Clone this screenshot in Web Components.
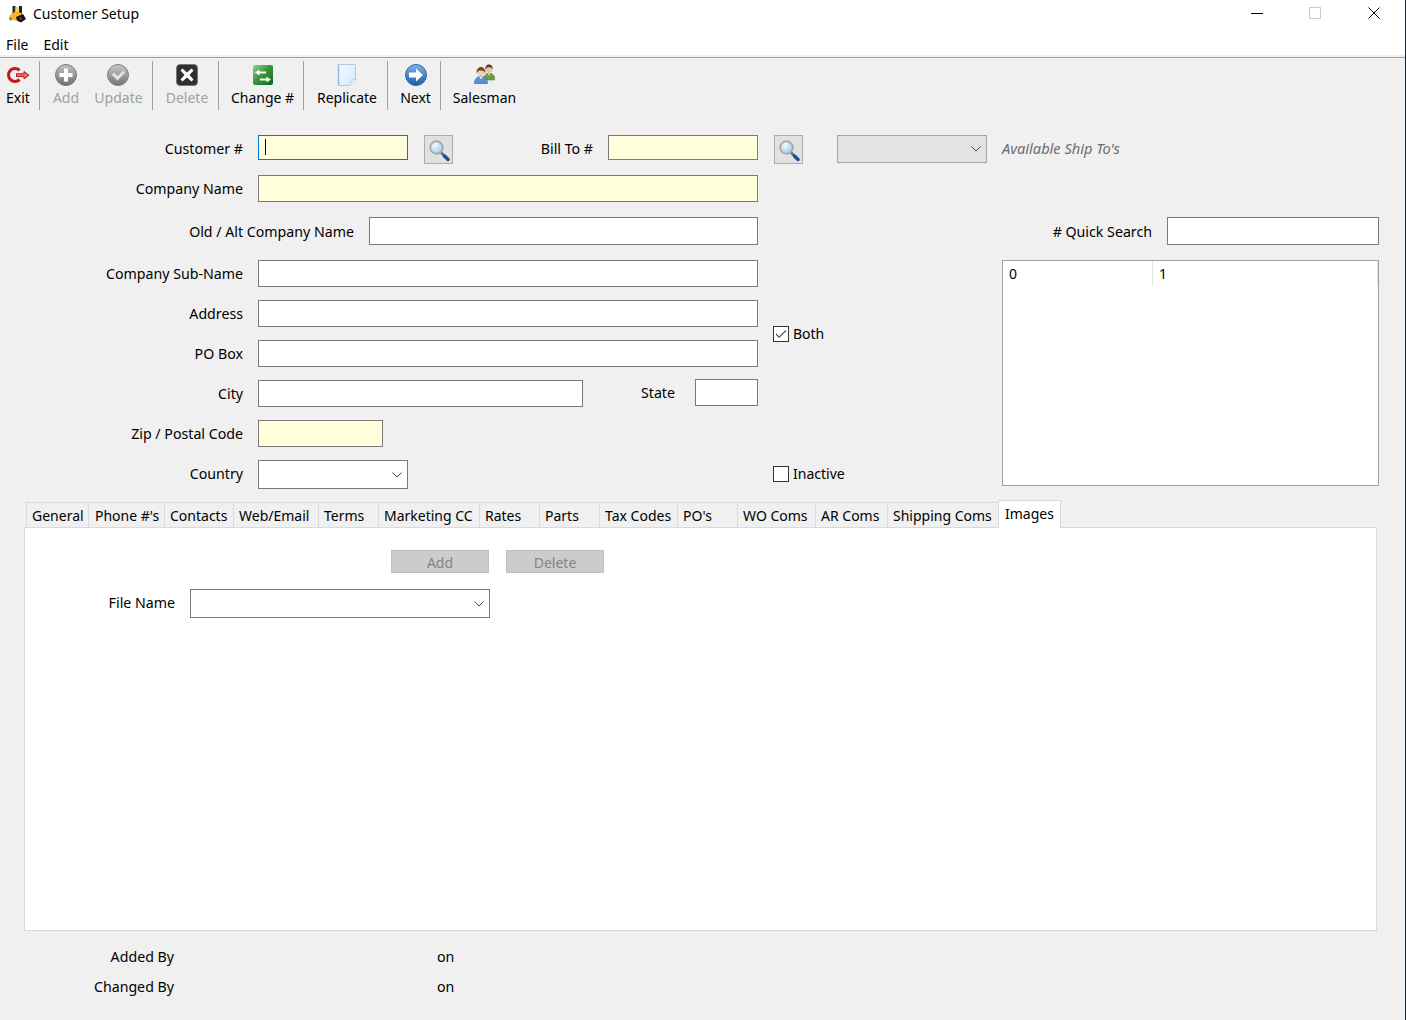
<!DOCTYPE html>
<html lang="en">
<head>
<meta charset="utf-8">
<title>Customer Setup</title>
<style>
  html, body { margin: 0; padding: 0; height: 100%; overflow: hidden; }
  body { background: #1b2b3a; font: 14px "Noto Sans", "Open Sans", sans-serif; color: #000; }
</style>
</head>
<body>
<customer-setup></customer-setup>

<script>
// icons used by the toolbar and the search buttons
const ICONS = {
  exit: `<svg width="24" height="22" viewBox="0 0 24 22">
    <path d="M13.600 6.400A6.500 6.500 0 1 0 13.600 15.600" fill="none" stroke="#c4161b" stroke-width="3"/>
    <path d="M10.500 9.800h7.500V7.500l5 3.700-5 3.700v-2.300h-7.500z" fill="#ee6a66" stroke="#b81418" stroke-width="1"/>
  </svg>`,
  add: `<svg width="22" height="22" viewBox="0 0 22 22">
    <defs><linearGradient id="g" x1="0" y1="0" x2="0" y2="1"><stop offset="0" stop-color="#c4c4c4"/><stop offset="1" stop-color="#6f6f6f"/></linearGradient></defs>
    <circle cx="11" cy="11" r="10.500" fill="url(#g)" stroke="#777"/>
    <path d="M9 4.500h4V9h4.500v4H13v4.500H9V13H4.500V9H9z" fill="#fff"/>
  </svg>`,
  update: `<svg width="22" height="22" viewBox="0 0 22 22" style="margin-left:-2px">
    <defs><linearGradient id="g" x1="0" y1="0" x2="0" y2="1"><stop offset="0" stop-color="#c8c8c8"/><stop offset="1" stop-color="#747474"/></linearGradient></defs>
    <circle cx="11" cy="11" r="10.500" fill="url(#g)" stroke="#808080"/>
    <path d="M4.500 10.500l2.500-2 3.500 3.500 6-5.500 1.500 2-7.500 8z" fill="#e4e4e4"/>
  </svg>`,
  del: `<svg width="22" height="22" viewBox="0 0 22 22">
    <rect x=".5" y=".5" width="21" height="21" rx="3.500" fill="#2f2f2f" stroke="#777"/>
    <path d="M6.500 4.500L11 8.500l4.500-4 2 2L13.500 11l4 4.500-2 2L11 13.500l-4.500 4-2-2 4-4.500-4-4.500z" fill="#fff"/>
  </svg>`,
  change: `<svg width="20" height="20" viewBox="0 0 20 20">
    <defs><linearGradient id="g" x1="0" y1="0" x2="1" y2="1"><stop offset="0" stop-color="#9bd08f"/><stop offset=".45" stop-color="#3c9a3d"/><stop offset="1" stop-color="#0b6418"/></linearGradient></defs>
    <rect width="20" height="20" rx="2" fill="url(#g)"/>
    <path d="M2 7.500L6.500 4.500v2H13v2H6.500v2zM18 14.500L13.500 11.500v2H7v2h6.500v2z" fill="#fff"/>
  </svg>`,
  replicate: `<svg width="20" height="22" viewBox="0 0 20 22">
    <defs><linearGradient id="g" x1="0" y1="0" x2="1" y2="1"><stop offset="0" stop-color="#f6fbff"/><stop offset="1" stop-color="#d3e7f8"/></linearGradient></defs>
    <path d="M1.500.5h17v15l-5.500 6H1.500z" fill="url(#g)" stroke="#a9cdea"/>
    <path d="M1.500 1v20" stroke="#8fbce2" stroke-width="1.500"/>
    <path d="M18.500 15.500c-2 0-4.500.5-5.500 6" fill="#fff" stroke="#9fc4e2"/>
  </svg>`,
  next: `<svg width="22" height="22" viewBox="0 0 22 22">
    <defs><linearGradient id="g" x1="0" y1="0" x2="0" y2="1"><stop offset="0" stop-color="#7fb3e6"/><stop offset="1" stop-color="#1a5ea8"/></linearGradient></defs>
    <circle cx="11" cy="11" r="10.500" fill="url(#g)" stroke="#2a6aad"/>
    <path d="M4 8.500h7V4.500l7 6.500-7 6.500v-4H4z" fill="#fff"/>
  </svg>`,
  salesman: `<svg width="21" height="22" viewBox="0 0 21 22">
    <path d="M10 14c.3-3 2.500-5 5-5s5.500 1.500 5.700 5.500V16H12z" fill="#6f9f3d" stroke="#4d7a28" stroke-width=".5"/>
    <path d="M13.500 9.500l1.500 2 1.500-2z" fill="#e8f0d8"/>
    <circle cx="15" cy="5" r="3.400" fill="#e6c3a3"/>
    <path d="M11.300 5.500C11 2.500 12.800.5 15 .5s4 2 3.700 5c-.8-1.700-2-2.300-3.700-2.300s-2.900.6-3.700 2.300z" fill="#5d3a22"/>
    <path d="M.5 19.500c0-4.500 2.500-7 6.500-7s6.500 2.500 6.500 7z" fill="#5a93cf" stroke="#2f5f96" stroke-width=".6"/>
    <path d="M5 12.800l2 2.200 2-2.200z" fill="#fff"/>
    <circle cx="7" cy="8.500" r="3.800" fill="#f0cfb2"/>
    <path d="M2.700 9.500C2 5.500 4.500 3 7 3s5 2.500 4.300 6.500c-.7-2-1.900-3-4.300-3s-3.600 1-4.300 3z" fill="#84481f"/>
  </svg>`,
  search: `<svg width="22" height="24" viewBox="0 0 22 24">
    <defs><radialGradient id="g" cx=".35" cy=".3" r=".8"><stop offset="0" stop-color="#f2f8fe"/><stop offset="1" stop-color="#9cc6ec"/></radialGradient></defs>
    <path d="M12 13.500l3 3" stroke="#6a6a6a" stroke-width="2.500"/>
    <path d="M15.500 17l3.500 3.500" stroke="#1c4da0" stroke-width="3.500" stroke-linecap="round"/>
    <circle cx="7.500" cy="8.500" r="6.300" fill="url(#g)" stroke="#a3a9ae" stroke-width="1.800"/>
  </svg>`,
  chevron: `<svg width="10" height="6" viewBox="0 0 10 6"><path d="M.5.500L5 5 9.500.500" fill="none" stroke="#444" stroke-width="1"/></svg>`,
  check: `<svg width="14" height="14" viewBox="0 0 14 14"><path d="M2 7l3.200 3.200L12 3.500" fill="none" stroke="#555" stroke-width="1.200"/></svg>`,
  logo: `<svg width="17" height="18" viewBox="0 0 17 18">
    <path d="M3.500 1h3v8h-3zM10 1h3v8h-3z" fill="#2a241a"/>
    <path d="M6.500 2H10v5H6.500z" fill="#f3d679"/>
    <path d="M0 11l7-5 7 3-3 7-7-1z" fill="#f5b81f"/>
    <path d="M7 12l7-3 3 5-5 3.500-4-2z" fill="#17140e"/>
    <path d="M0 12l2.500 1 .5 2-2 .5z" fill="#6d6250"/>
    <circle cx="11.500" cy="13.500" r="1.300" fill="#5a5040"/>
  </svg>`
};

class TitleBar extends HTMLElement {
  constructor() { super(); this.attachShadow({ mode: 'open' }); }
  connectedCallback() {
    this.shadowRoot.innerHTML = `
      <style>
        :host { display: flex; align-items: center; height: 30px; background: #fff; padding: 0 3px 0 9px; }
        .logo { display: flex; width: 24px; margin-top: -2px; }
        .caption { flex: 1; margin-top: -4px; }
        .win { width: 58px; height: 28px; display: flex; align-items: center; justify-content: center; margin-top: -4px; }
      </style>
      <span class="logo">${ICONS.logo}</span>
      <span class="caption"><slot></slot></span>
      <span class="win" style="margin-left:-1px"><svg width="12" height="12"><path d="M0 6.500h12" stroke="#000"/></svg></span>
      <span class="win"><svg width="12" height="12"><rect x=".5" y=".5" width="11" height="11" fill="none" stroke="#ccc"/></svg></span>
      <span class="win" style="margin-left:1px;margin-right:-1px"><svg width="12" height="12"><path d="M.5.500l11 11M11.500.500l-11 11" stroke="#000"/></svg></span>
    `;
  }
}

class MenuBar extends HTMLElement {
  constructor() { super(); this.attachShadow({ mode: 'open' }); }
  connectedCallback() {
    this.shadowRoot.innerHTML = `
      <style>
        :host { display: flex; gap: 15px; align-items: center; height: 25px; padding: 4px 0 0 6px; box-sizing: border-box; background: #fff; }
      </style>
      <span>File</span><span>Edit</span>
    `;
  }
}

class ToolBar extends HTMLElement {
  constructor() { super(); this.attachShadow({ mode: 'open' }); }
  connectedCallback() {
    this.shadowRoot.innerHTML = `
      <style>
        :host { display: flex; height: 52px; padding: 3px 0 0 6px; box-sizing: border-box; margin-top: 2px; border-top: 1px solid #a0a0a0; }
      </style>
      <slot></slot>
    `;
  }
}

class ToolButton extends HTMLElement {
  constructor() { super(); this.attachShadow({ mode: 'open' }); }
  connectedCallback() {
    const w = this.getAttribute('w');
    const off = this.hasAttribute('disabled');
    const sep = this.hasAttribute('sep');
    this.shadowRoot.innerHTML = `
      <style>
        :host { display: block; height: 49px; }
        .wrap { display: flex; height: 49px; }
        .btn { width: ${w}px; display: flex; flex-direction: column; align-items: center; padding-top: 3px; }
        .ico { height: 22px; display: flex; justify-content: center; align-items: center; }
        .txt { margin-top: 2px; line-height: 20px; white-space: nowrap; color: ${off ? '#a0a0a0' : '#000'}; }
        .sep { width: 1px; background: #a0a0a0; margin: 0 12px 0 9px; }
      </style>
      <div class="wrap">
        <div class="btn">
          <div class="ico">${ICONS[this.getAttribute('icon')]}</div>
          <div class="txt"><slot></slot></div>
        </div>
        ${sep ? '<div class="sep"></div>' : ''}
      </div>
    `;
  }
}

class FormRow extends HTMLElement {
  constructor() { super(); this.attachShadow({ mode: 'open' }); }
  connectedCallback() {
    const w = this.getAttribute('label-w') || 243;
    const h = this.getAttribute('label-h') || 27;
    this.shadowRoot.innerHTML = `
      <style>
        :host { display: flex; align-items: flex-start; }
        .lbl { width: ${w}px; height: ${h}px; line-height: ${h}px; font-size: 14.2px; text-align: right; margin-right: 15px; white-space: nowrap; flex: none; }
      </style>
      <span class="lbl">${this.getAttribute('label')}</span>
      <slot></slot>
    `;
  }
}

class TextBox extends HTMLElement {
  constructor() { super(); this.attachShadow({ mode: 'open' }); }
  connectedCallback() {
    const focused = this.hasAttribute('focused');
    this.shadowRoot.innerHTML = `
      <style>
        :host { display: block; flex: none; box-sizing: border-box; height: ${this.getAttribute('h') || 27}px;
          width: ${this.getAttribute('w')}px; margin-left: ${this.getAttribute('ml') || 0}px;
          background: ${this.hasAttribute('req') ? '#ffffdc' : '#fff'};
          border: 1px solid ${focused ? '#0078d7' : '#7a7a7a'}; }
        .caret { width: 1px; height: 16px; background: #000; margin: 3px 0 0 6px; }
      </style>
      ${focused ? '<div class="caret"></div>' : ''}
    `;
  }
}

class SearchButton extends HTMLElement {
  constructor() { super(); this.attachShadow({ mode: 'open' }); }
  connectedCallback() {
    this.shadowRoot.innerHTML = `
      <style>
        :host { display: flex; flex: none; width: 29px; height: 29px; box-sizing: border-box; padding: 3px 0 0 4px;
          margin-left: ${this.getAttribute('ml') || 0}px; background: #e1e1e1; border: 1px solid #adadad; }
      </style>
      ${ICONS.search}
    `;
  }
}

class ComboBox extends HTMLElement {
  constructor() { super(); this.attachShadow({ mode: 'open' }); }
  connectedCallback() {
    const off = this.hasAttribute('disabled');
    this.shadowRoot.innerHTML = `
      <style>
        :host { display: flex; flex: none; align-items: center; justify-content: flex-end; box-sizing: border-box;
          width: ${this.getAttribute('w')}px; height: ${this.getAttribute('h') || 29}px; padding-right: 5px;
          margin-left: ${this.getAttribute('ml') || 0}px;
          background: ${off ? '#e3e3e3' : '#fff'}; border: 1px solid ${off ? '#a6a6a6' : '#7a7a7a'}; }
        svg { display: block; }
      </style>
      ${ICONS.chevron}
    `;
  }
}

class CheckField extends HTMLElement {
  constructor() { super(); this.attachShadow({ mode: 'open' }); }
  connectedCallback() {
    const on = this.hasAttribute('checked');
    this.shadowRoot.innerHTML = `
      <style>
        :host { display: flex; align-items: center; gap: 4px; height: 17px; padding-left: 15px; }
        .box { width: 16px; height: 16px; box-sizing: border-box; background: #fff; border: 1px solid #333; display: flex; align-items: center; justify-content: center; }
      </style>
      <span class="box">${on ? ICONS.check : ''}</span>
      <span><slot></slot></span>
    `;
  }
}

class QuickList extends HTMLElement {
  constructor() { super(); this.attachShadow({ mode: 'open' }); }
  connectedCallback() {
    this.shadowRoot.innerHTML = `
      <style>
        :host { display: block; box-sizing: border-box; height: 226px; background: #fff; border: 1px solid #a0a0a0; }
        .head { display: grid; grid-template-columns: 149px 1fr; height: 25px; border-right: 1px solid #e5e5e5; }
        .head span { padding: 0 0 0 6px; line-height: 25px; }
        .head span + span { border-left: 1px solid #e5e5e5; }
      </style>
      <div class="head"><span>0</span><span>1</span></div>
    `;
  }
}

class TabStrip extends HTMLElement {
  constructor() { super(); this.attachShadow({ mode: 'open' }); }
  connectedCallback() {
    this.shadowRoot.innerHTML = `
      <style>
        :host { display: flex; align-items: flex-end; height: 28px; padding-left: 2px; margin: 0 0 -1px 24px; position: relative; z-index: 1; }
      </style>
      <slot></slot>
    `;
  }
}

class TabItem extends HTMLElement {
  constructor() { super(); this.attachShadow({ mode: 'open' }); }
  connectedCallback() {
    const active = this.hasAttribute('active');
    this.shadowRoot.innerHTML = `
      <style>
        :host { display: block; box-sizing: border-box; flex: none; width: ${this.getAttribute('w')}px;
          height: ${active ? 28 : 26}px; line-height: 25px; padding-left: ${this.getAttribute('pad') || 5}px; white-space: nowrap;
          background: ${active ? '#fff' : '#f0f0f0'}; border: 1px solid #d9d9d9;
          border-right: none; ${active ? 'border-right: 1px solid #d9d9d9; border-bottom: none;' : ''} }
      </style>
      <slot></slot>
    `;
  }
}

class ImagesPanel extends HTMLElement {
  constructor() { super(); this.attachShadow({ mode: 'open' }); }
  connectedCallback() {
    this.shadowRoot.innerHTML = `
      <style>
        :host { display: block; box-sizing: border-box; width: 1353px; height: 404px; margin-left: 24px;
          background: #fff; border: 1px solid #d9d9d9; padding: 22px 0 0 0; }
        .btns { display: flex; gap: 17px; margin-left: 366px; }
        .btns span { width: 98px; height: 23px; box-sizing: border-box; background: #ccc; border: 1px solid #bfbfbf;
          color: #838383; text-align: center; line-height: 24px; }
        .file { display: flex; align-items: center; margin-top: 16px; }
        .file label { width: 150px; text-align: right; margin: -2px 15px 0 0; font-size: 14.2px; }
      </style>
      <div class="btns"><span>Add</span><span>Delete</span></div>
      <div class="file"><label>File Name</label><combo-box w="300"></combo-box></div>
    `;
  }
}

class AuditFooter extends HTMLElement {
  constructor() { super(); this.attachShadow({ mode: 'open' }); }
  connectedCallback() {
    this.shadowRoot.innerHTML = `
      <style>
        :host { display: grid; grid-template-columns: 174px auto; column-gap: 263px; grid-auto-rows: 30px; justify-content: start; padding-top: 11px; }
        span { line-height: 30px; font-size: 14.2px; }
        .l { text-align: right; }
      </style>
      <span class="l">Added By</span><span>on</span>
      <span class="l">Changed By</span><span>on</span>
    `;
  }
}

class CustomerForm extends HTMLElement {
  constructor() { super(); this.attachShadow({ mode: 'open' }); }
  connectedCallback() {
    this.shadowRoot.innerHTML = `
      <style>
        :host { display: grid; grid-template-columns: 758px 244px 377px; grid-template-rows: 40px 42px 43px repeat(6, 40px); margin-top: 26px; }
        .top { grid-column: 1 / 4; display: flex; align-items: flex-start; }
        .top span.b { width: 140px; height: 28px; line-height: 28px; font-size: 14.2px; text-align: right; margin-right: 15px; flex: none; }
        .ship { margin-left: 15px; height: 28px; line-height: 26px; font-size: 14.6px; font-style: italic; color: #6d6d6d; white-space: nowrap; }
        .left { grid-column: 1; }
        .quick { grid-column: 3; grid-row: 3; }
        .list { grid-column: 3; grid-row: 4 / 10; }
        .both { grid-column: 2; grid-row: 5; padding-top: 25px; }
        .inactive { grid-column: 2; grid-row: 9; padding-top: 5px; }
        .state { display: flex; align-items: flex-start; }
        .state span { width: 92px; height: 27px; line-height: 25px; font-size: 14.2px; text-align: right; margin-right: 20px; flex: none; }
      </style>
      <div class="top">
        <form-row label="Customer #" label-h="28"><text-box w="150" h="25" req focused></text-box><search-button ml="16"></search-button></form-row>
        <span class="b">Bill To #</span>
        <text-box w="150" h="25" req></text-box>
        <search-button ml="16"></search-button>
        <combo-box w="150" h="28" ml="34" disabled></combo-box>
        <span class="ship">Available Ship To's</span>
      </div>
      <form-row class="left" label="Company Name"><text-box w="500" req></text-box></form-row>
      <form-row class="left" label="Old / Alt Company Name" label-w="354" label-h="29"><text-box w="389" h="28"></text-box></form-row>
      <form-row class="quick" label="# Quick Search" label-w="150" label-h="29"><text-box w="212" h="28"></text-box></form-row>
      <form-row class="left" label="Company Sub-Name"><text-box w="500"></text-box></form-row>
      <form-row class="left" label="Address"><text-box w="500"></text-box></form-row>
      <form-row class="left" label="PO Box"><text-box w="500"></text-box></form-row>
      <form-row class="left" label="City">
        <text-box w="325"></text-box>
        <div class="state"><span>State</span><text-box w="63" style="margin-top:-1px"></text-box></div>
      </form-row>
      <form-row class="left" label="Zip / Postal Code"><text-box w="125" req></text-box></form-row>
      <form-row class="left" label="Country"><combo-box w="150"></combo-box></form-row>
      <div class="both"><check-field checked>Both</check-field></div>
      <div class="inactive"><check-field>Inactive</check-field></div>
      <quick-list class="list"></quick-list>
    `;
  }
}

class CustomerSetup extends HTMLElement {
  constructor() { super(); this.attachShadow({ mode: 'open' }); }
  connectedCallback() {
    this.shadowRoot.innerHTML = `
      <style>
        :host { display: block; width: 1405px; height: 1020px; background: #f0f0f0; overflow: hidden; }
      </style>
      <title-bar>Customer Setup</title-bar>
      <menu-bar></menu-bar>
      <tool-bar>
        <tool-button icon="exit" w="24" sep>Exit</tool-button>
        <tool-button icon="add" w="28" disabled style="margin-right:14px">Add</tool-button>
        <tool-button icon="update" w="49" sep disabled>Update</tool-button>
        <tool-button icon="del" w="44" sep disabled>Delete</tool-button>
        <tool-button icon="change" w="63" sep>Change #</tool-button>
        <tool-button icon="replicate" w="62" sep>Replicate</tool-button>
        <tool-button icon="next" w="31" sep>Next</tool-button>
        <tool-button icon="salesman" w="63">Salesman</tool-button>
      </tool-bar>
      <customer-form></customer-form>
      <tab-strip>
        <tab-item w="62">General</tab-item>
        <tab-item w="76" pad="6">Phone #'s</tab-item>
        <tab-item w="69">Contacts</tab-item>
        <tab-item w="85">Web/Email</tab-item>
        <tab-item w="60">Terms</tab-item>
        <tab-item w="101">Marketing CC</tab-item>
        <tab-item w="60">Rates</tab-item>
        <tab-item w="60">Parts</tab-item>
        <tab-item w="78">Tax Codes</tab-item>
        <tab-item w="60">PO's</tab-item>
        <tab-item w="78">WO Coms</tab-item>
        <tab-item w="72">AR Coms</tab-item>
        <tab-item w="111">Shipping Coms</tab-item>
        <tab-item w="63" pad="6" active>Images</tab-item>
      </tab-strip>
      <images-panel></images-panel>
      <audit-footer></audit-footer>
    `;
  }
}

customElements.define('title-bar', TitleBar);
customElements.define('menu-bar', MenuBar);
customElements.define('tool-bar', ToolBar);
customElements.define('tool-button', ToolButton);
customElements.define('form-row', FormRow);
customElements.define('text-box', TextBox);
customElements.define('search-button', SearchButton);
customElements.define('combo-box', ComboBox);
customElements.define('check-field', CheckField);
customElements.define('quick-list', QuickList);
customElements.define('tab-strip', TabStrip);
customElements.define('tab-item', TabItem);
customElements.define('images-panel', ImagesPanel);
customElements.define('audit-footer', AuditFooter);
customElements.define('customer-form', CustomerForm);
customElements.define('customer-setup', CustomerSetup);
</script>
</body>
</html>
